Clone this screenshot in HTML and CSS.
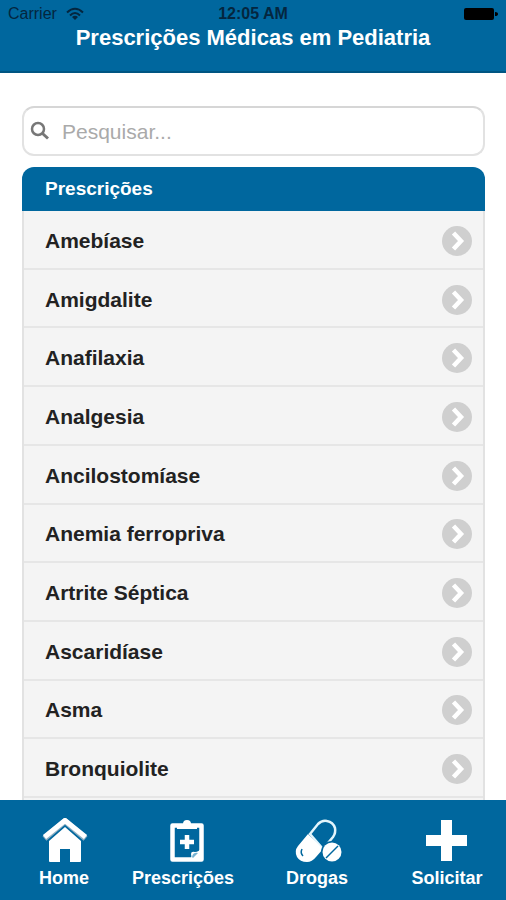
FILE: index.html
```html
<!DOCTYPE html>
<html lang="pt-BR">
<head>
<meta charset="utf-8">
<meta name="viewport" content="width=device-width, initial-scale=1">
<title>Prescrições Médicas em Pediatria</title>
<link rel="stylesheet" href="styles.css">
</head>
<body>
<svg class="defs" aria-hidden="true">
  <symbol id="chevron" viewBox="0 0 30 30">
    <circle cx="15" cy="15" r="15" fill="#cfcfcf"/>
    <path d="M11.500 7 19 15l-7.500 8" fill="none" stroke="#fff" stroke-width="4.500"/>
  </symbol>
</svg>
<header class="header">
  <div class="status">
    <span class="carrier">Carrier
      <svg class="wifi" viewBox="0 0 18 14" aria-hidden="true">
        <g fill="none" stroke="currentColor" stroke-width="2"><path d="M1 5.500Q9-2 17 5.500"/><path d="M4 8.500Q9 3.500 14 8.500"/></g>
        <path d="M9 13 6 10Q9 7.500 12 10Z" fill="currentColor"/>
      </svg>
    </span>
    <span class="clock">12:05 AM</span>
    <svg class="battery" viewBox="0 0 34 12" role="img" aria-label="Bateria"><rect width="30" height="12" rx="2"/><path d="M31 4q3 0 3 2t-3 2z"/></svg>
  </div>
  <h1 class="title">Prescrições Médicas em Pediatria</h1>
</header>
<main class="main">
  <label class="search">
    <svg class="search-icon" viewBox="0 0 20 20" role="img" aria-label="Pesquisar"><circle cx="8" cy="8" r="6" fill="none" stroke="currentColor" stroke-width="2.500"/><path d="m12.500 12.500 5.500 5" stroke="currentColor" stroke-width="3"/></svg>
    <input class="search-input" type="text" placeholder="Pesquisar...">
  </label>
  <section class="panel">
    <h2 class="panel-title">Prescrições</h2>
    <ul class="list">
      <li><a class="row" href="#">Amebíase<svg class="arrow"><use href="#chevron"/></svg></a></li>
      <li><a class="row" href="#">Amigdalite<svg class="arrow"><use href="#chevron"/></svg></a></li>
      <li><a class="row" href="#">Anafilaxia<svg class="arrow"><use href="#chevron"/></svg></a></li>
      <li><a class="row" href="#">Analgesia<svg class="arrow"><use href="#chevron"/></svg></a></li>
      <li><a class="row" href="#">Ancilostomíase<svg class="arrow"><use href="#chevron"/></svg></a></li>
      <li><a class="row" href="#">Anemia ferropriva<svg class="arrow"><use href="#chevron"/></svg></a></li>
      <li><a class="row" href="#">Artrite Séptica<svg class="arrow"><use href="#chevron"/></svg></a></li>
      <li><a class="row" href="#">Ascaridíase<svg class="arrow"><use href="#chevron"/></svg></a></li>
      <li><a class="row" href="#">Asma<svg class="arrow"><use href="#chevron"/></svg></a></li>
      <li><a class="row" href="#">Bronquiolite<svg class="arrow"><use href="#chevron"/></svg></a></li>
    </ul>
  </section>
</main>
<nav class="tabs">
  <a class="tab" href="#">
    <svg class="tab-icon" viewBox="0 0 52 46" aria-hidden="true">
      <path d="M11 23 27 9l16 14v20q0 1-1 1H32V31H22v13H12q-1 0-1-1z" fill="#fff"/>
      <path d="M6.500 20.500 27 3l20.500 17.500" fill="none" stroke="#8fb0c4" stroke-width="6"/>
      <path d="M6.500 19 27 2.500 47.500 19" fill="none" stroke="#fff" stroke-width="5" stroke-linejoin="round"/>
    </svg>
    Home
  </a>
  <a class="tab" href="#">
    <svg class="tab-icon" viewBox="0 0 52 46" aria-hidden="true">
      <rect x="15.500" y="7.500" width="29" height="34" fill="none" stroke="#fff" stroke-width="4.500" stroke-linejoin="round"/>
      <path d="M20 11V8q0-2 3-2h3q0-4 4-4t4 4h3q3 0 3 2v3z" fill="#fff"/>
      <path d="M30 17v14M23 24h14" stroke="#fff" stroke-width="4.500"/>
      <path d="M33 42q2-2 1-6 0-3 4-2 4 0 6-4v12z" fill="#fff"/>
      <path d="M35 39q1-5 6-4l-5 5z" fill="#75b2d2"/>
    </svg>
    Prescrições
  </a>
  <a class="tab" href="#">
    <svg class="tab-icon" viewBox="0 0 52 46" aria-hidden="true">
      <path d="m19 16 8-10q4-4 9-3 6 1 8 7 1 5-2 9L32 31z" fill="none" stroke="#e3f5fc" stroke-width="2.500"/>
      <path d="m17 16 15 15-7 8q-4 5-9 5-7 0-10-5-3-6 1-11z" fill="#fff"/>
      <path d="m11 31q-2 4 1 7" fill="none" stroke="#00679e" stroke-width="1.500"/>
      <circle cx="41" cy="34" r="11" fill="#00679e"/>
      <circle cx="41" cy="34" r="9.500" fill="#fff"/>
      <path d="M35 40 47 28" stroke="#00679e" stroke-width="1.500"/>
    </svg>
    Drogas
  </a>
  <a class="tab" href="#">
    <svg class="tab-icon" viewBox="0 0 52 46" aria-hidden="true"><path d="M20 2h11v15h15v11H31v15H20V28H5V17h15z" fill="#fff"/></svg>
    Solicitar
  </a>
</nav>
</body>
</html>
```
FILE: styles.css
```css
* { box-sizing: border-box; }

body {
  margin: 0;
  height: 100vh;
  display: flex;
  flex-direction: column;
  background: #fff;
  color: #222;
  font-family: "Liberation Sans", Arial, sans-serif;
}

.defs { display: none; }

.header {
  padding: 4px 8px 20px;
  background: #00679e;
  border-bottom: 2px solid #005582;
}

.status {
  display: grid;
  grid-template-columns: 1fr auto 1fr;
  align-items: center;
  height: 20px;
  color: #04263f;
  font-size: 16px;
}

.carrier { display: flex; align-items: center; gap: 9px; }
.clock { font-weight: bold; }
.wifi { width: 18px; height: 14px; }
.battery { width: 34px; height: 12px; justify-self: end; fill: #000; }

.title {
  margin: 0;
  color: #fff;
  font-size: 22px;
  line-height: 27px;
  text-align: center;
}

.main {
  flex: 1;
  display: flex;
  flex-direction: column;
  gap: 11px;
  padding: 33px 21px 0 22px;
}

.search {
  display: flex;
  align-items: center;
  gap: 12px;
  height: 50px;
  padding: 0 6px;
  border: 2px solid #e2e2e2;
  border-top-color: #d6d6d6;
  border-radius: 12px;
}

.search-icon { width: 20px; height: 20px; color: #777; }

.search-input {
  flex: 1;
  min-width: 0;
  padding: 1px 0 0;
  border: 0;
  outline: 0;
  background: transparent;
  color: #222;
  font: 21px "Liberation Sans", Arial, sans-serif;
}

.search-input::placeholder { color: #aaa; }

.panel { flex: 1; display: flex; flex-direction: column; }

.panel-title {
  margin: 0;
  padding: 0 23px;
  border-radius: 12px 12px 0 0;
  background: #00679e;
  color: #fff;
  font-size: 19px;
  line-height: 44px;
}

.list {
  flex: 1;
  display: grid;
  grid-auto-rows: 1fr;
  margin: 0;
  padding: 0 0 2px;
  border: solid #e2e2e2;
  border-width: 0 2px;
  background: #f4f4f4;
  list-style: none;
}

.list li { display: flex; border-bottom: 2px solid #e6e6e6; }

.row {
  flex: 1;
  display: flex;
  align-items: center;
  justify-content: space-between;
  padding: 3px 11px 0 21px;
  color: #222;
  font-size: 21px;
  font-weight: bold;
  text-decoration: none;
}

.arrow { width: 30px; height: 30px; }

.tabs {
  display: grid;
  grid-template-columns: 128fr 110fr 158fr 102fr;
  padding: 18px 8px 11px 0;
  background: #00679e;
}

.tab {
  display: flex;
  flex-direction: column;
  align-items: center;
  gap: 4px;
  color: #fff;
  font-size: 18px;
  font-weight: bold;
  line-height: 21px;
  text-decoration: none;
}

.tab-icon { width: 52px; height: 46px; }
```
